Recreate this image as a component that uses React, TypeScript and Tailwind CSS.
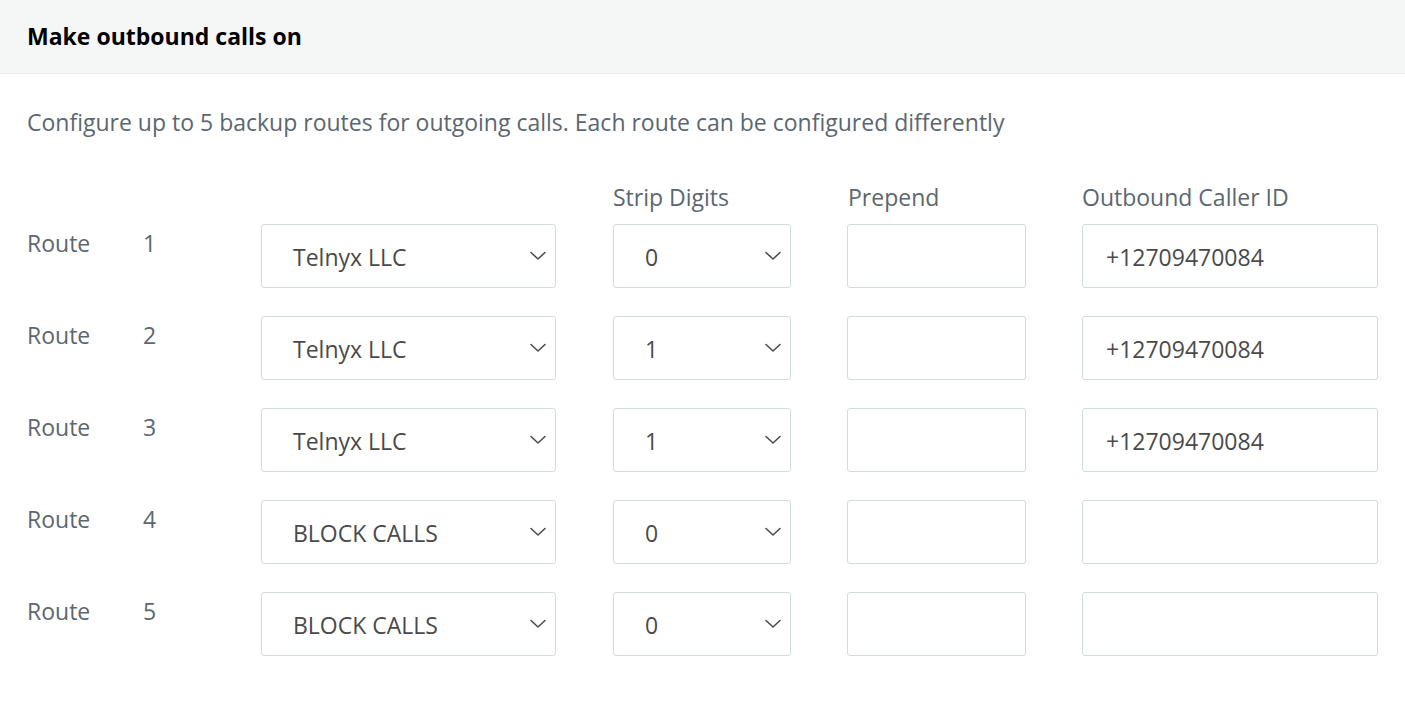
import React from 'react';

const routes = [
  { n: 1, carrier: 'Telnyx LLC', strip: '0', callerId: '+12709470084' },
  { n: 2, carrier: 'Telnyx LLC', strip: '1', callerId: '+12709470084' },
  { n: 3, carrier: 'Telnyx LLC', strip: '1', callerId: '+12709470084' },
  { n: 4, carrier: 'BLOCK CALLS', strip: '0', callerId: '' },
  { n: 5, carrier: 'BLOCK CALLS', strip: '0', callerId: '' },
];

function Chevron() {
  return (
    <svg width="18" height="10" viewBox="0 0 18 10" fill="none" className="shrink-0">
      <polyline points="2,1.5 9,8 16,1.5" stroke="#4d4d4d" strokeWidth="1.6" strokeLinecap="round" strokeLinejoin="round" />
    </svg>
  );
}

function FakeSelect({ value, width }: { value: string; width: string }) {
  return (
    <div className={`${width} h-[64px] flex items-center justify-between pl-[31px] pr-[8px] border border-[#d2dcdf] rounded-[3px] bg-white text-[#4a4a4a]`}>
      <span className="pt-[2px]">{value}</span>
      <Chevron />
    </div>
  );
}

function TextBox({ value, width }: { value: string; width: string }) {
  return (
    <div className={`${width} h-[64px] flex items-center pl-[23px] pt-[2px] border border-[#d2dcdf] rounded-[3px] bg-white text-[#4a4a4a]`}>
      {value}
    </div>
  );
}

export default function App() {
  return (
    <div className="min-h-screen bg-white text-[23px] leading-[33px]" style={{ fontFamily: '"Open Sans", Lato, sans-serif' }}>
      <div className="h-[74px] bg-[#f5f7f7] border-b border-[#e9eded] flex items-center px-[27px]">
        <h2 className="font-bold text-[23px] text-black">Make outbound calls on</h2>
      </div>

      <div className="px-[27px]">
        <p className="mt-[32px] text-[#5b6770]">
          Configure up to 5 backup routes for outgoing calls. Each route can be configured differently
        </p>

        <div className="mt-[42px] flex text-[#5b6770] mb-[10px]">
          <div className="w-[586px]" />
          <div className="w-[178px]">Strip Digits</div>
          <div className="w-[57px]" />
          <div className="w-[178px]">Prepend</div>
          <div className="w-[56px]" />
          <div>Outbound Caller ID</div>
        </div>

        <div className="flex flex-col gap-[28px]">
          {routes.map(r => (
            <div key={r.n} className="flex items-start">
              <div className="w-[116px] pt-[3px] text-[#5b6770]">Route</div>
              <div className="w-[118px] pt-[3px] text-[#5b6770]">{r.n}</div>
              <FakeSelect value={r.carrier} width="w-[295px]" />
              <div className="w-[57px]" />
              <FakeSelect value={r.strip} width="w-[178px]" />
              <div className="w-[56px]" />
              <TextBox value="" width="w-[179px]" />
              <div className="w-[56px]" />
              <TextBox value={r.callerId} width="w-[296px]" />
            </div>
          ))}
        </div>
      </div>
    </div>
  );
}
